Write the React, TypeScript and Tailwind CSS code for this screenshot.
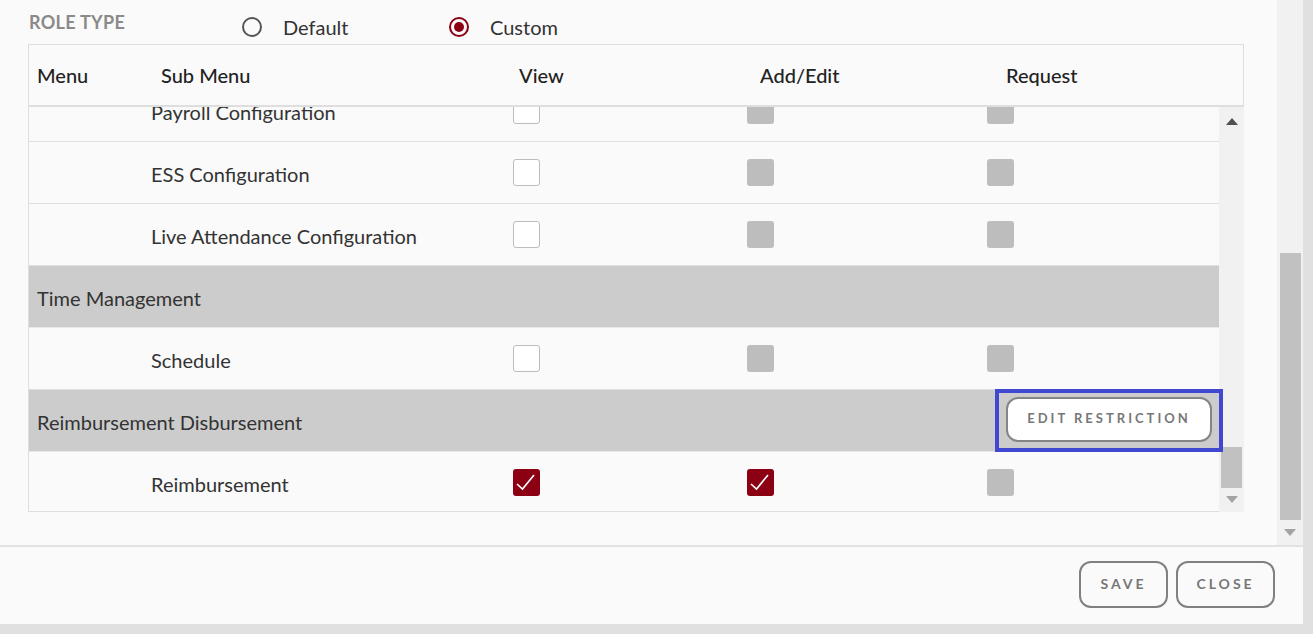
import React from "react";

type Box = "empty" | "off" | "on";

const rows: (
  | { kind: "group"; name: string }
  | { kind: "item"; name: string; view: Box; edit: Box; req: Box }
)[] = [
  { kind: "item", name: "Payroll Configuration", view: "empty", edit: "off", req: "off" },
  { kind: "item", name: "ESS Configuration", view: "empty", edit: "off", req: "off" },
  { kind: "item", name: "Live Attendance Configuration", view: "empty", edit: "off", req: "off" },
  { kind: "group", name: "Time Management" },
  { kind: "item", name: "Schedule", view: "empty", edit: "off", req: "off" },
  { kind: "group", name: "Reimbursement Disbursement" },
  { kind: "item", name: "Reimbursement", view: "on", edit: "on", req: "off" },
];

function Check({ state }: { state: Box }) {
  if (state === "on") {
    return (
      <div className="h-[27px] w-[27px] shrink-0 rounded-[3px] bg-[#8c0014]">
        <svg width="27" height="27" viewBox="0 0 27 27">
          <polyline points="4,15 9.5,20 21,6" fill="none" stroke="#fff" strokeWidth="1.6" />
        </svg>
      </div>
    );
  }
  if (state === "off") {
    return <div className="h-[27px] w-[27px] shrink-0 rounded-[3px] bg-[#bdbdbd]" />;
  }
  return <div className="h-[27px] w-[27px] shrink-0 rounded-[3px] border border-[#bcbcbc] bg-white" />;
}

function Radio({ checked }: { checked?: boolean }) {
  return (
    <div
      className={`flex h-[20px] w-[20px] items-center justify-center rounded-full border-2 ${
        checked ? "border-[#8c0014]" : "border-[#555]"
      }`}
    >
      {checked && <div className="h-[10px] w-[10px] rounded-full bg-[#8c0014]" />}
    </div>
  );
}

function Up() {
  return (
    <svg width="12" height="7" viewBox="0 0 12 7">
      <polygon points="6,0 12,7 0,7" fill="#505050" />
    </svg>
  );
}

function Down() {
  return (
    <svg width="12" height="7" viewBox="0 0 12 7">
      <polygon points="0,0 12,0 6,7" fill="#a3a3a3" />
    </svg>
  );
}

export default function App() {
  return (
    <div
      className="flex h-[634px] w-[1313px] flex-col overflow-hidden bg-[#e0e0e0]"
      style={{ fontFamily: "Lato, 'Open Sans', sans-serif" }}
    >
      <div className="flex h-[624px] w-[1303px] flex-col bg-[#fafafa]">
        {/* Scrollable content */}
        <div className="flex h-[545px] shrink-0">
          <div className="flex-1 pl-[28px] pr-[33px]">
            {/* Role type */}
            <div className="flex h-[44px] items-start">
              <div className="w-[214px] pl-[1px] pt-[9px] text-[18px] font-bold leading-[26px] tracking-[0.3px] text-[#8a8a8a]">
                ROLE TYPE
              </div>
              <div className="flex items-center pt-[14px] text-[20px] leading-[26px] text-[#333]">
                <Radio />
                <span className="ml-[21px] w-[166px]">Default</span>
                <Radio checked />
                <span className="ml-[21px]">Custom</span>
              </div>
            </div>

            {/* Table */}
            <div className="w-[1216px] border-t border-l border-[#dedede]">
              <div className="flex h-[62px] items-center border-b-2 border-r border-[#dedede] text-[20px] font-medium text-[#222]">
                <span className="w-[132px] pl-[8px]">Menu</span>
                <span className="w-[358px]">Sub Menu</span>
                <span className="w-[241px]">View</span>
                <span className="w-[246px]">Add/Edit</span>
                <span>Request</span>
              </div>

              <div className="relative flex h-[405px]">
                <div className="h-full w-[1190px] overflow-hidden border-b border-[#dedede]">
                  <div className="-mt-[27px]">
                    {rows.map((r) =>
                      r.kind === "group" ? (
                        <div
                          key={r.name}
                          className="flex h-[62px] items-center border-b border-[#e8e8e8] bg-[#cccccc] pl-[8px] pt-[2px] text-[20px] text-[#333]"
                        >
                          {r.name}
                        </div>
                      ) : (
                        <div
                          key={r.name}
                          className="flex h-[62px] items-center border-b border-[#e0e0e0] text-[20px] text-[#333]"
                        >
                          <span className="w-[484px] pl-[122px] pt-[2px]">{r.name}</span>
                          <Check state={r.view} />
                          <div className="w-[207px]" />
                          <Check state={r.edit} />
                          <div className="w-[213px]" />
                          <Check state={r.req} />
                        </div>
                      )
                    )}
                  </div>
                </div>

                {/* inner scrollbar */}
                <div className="flex h-full w-[25px] flex-col items-center bg-[#f1f1f1]">
                  <div className="mt-[11px]">
                    <Up />
                  </div>
                  <div className="flex-1" />
                  <div className="mb-[8px] h-[41px] w-[21px] bg-[#c1c1c1]" />
                  <div className="mb-[9px]">
                    <Down />
                  </div>
                </div>

                {/* highlighted restriction button */}
                <div className="absolute left-[966px] top-[282px] flex h-[63px] w-[228px] items-center justify-center border-[4px] border-[#4048cf] bg-[#cccccc]">
                  <button className="-mt-[3px] h-[45px] w-[206px] rounded-[12px] border-2 border-[#858585] bg-white text-[13px] font-bold tracking-[3px] text-[#777]">
                    EDIT RESTRICTION
                  </button>
                </div>
              </div>
            </div>
          </div>

          {/* outer scrollbar */}
          <div className="flex h-full w-[26px] flex-col items-center bg-[#f1f1f1]">
            <div className="h-[253px]" />
            <div className="ml-[1px] h-[267px] w-[21px] bg-[#c1c1c1]" />
            <div className="mt-[9px]">
              <Down />
            </div>
          </div>
        </div>

        {/* Footer */}
        <div className="flex flex-1 items-start justify-end gap-[8px] border-t-2 border-[#e2e2e2] pr-[28px] pt-[14px]">
          <button className="h-[47px] w-[89px] rounded-[12px] border-2 border-[#808080] pb-[2px] text-[14px] font-bold tracking-[3px] text-[#777]">
            SAVE
          </button>
          <button className="h-[47px] w-[99px] rounded-[12px] border-2 border-[#808080] pb-[2px] text-[14px] font-bold tracking-[3px] text-[#777]">
            CLOSE
          </button>
        </div>
      </div>
    </div>
  );
}
